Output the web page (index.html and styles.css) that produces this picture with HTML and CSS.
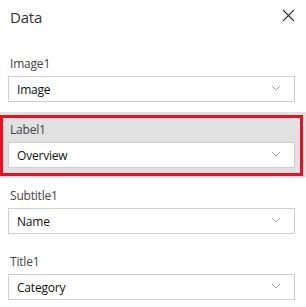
FILE: index.html
```html
<!DOCTYPE html>
<html lang="en">
<head>
    <meta charset="UTF-8">
    <meta name="viewport" content="width=device-width, initial-scale=1.0">
    <title>Data</title>
    <link rel="stylesheet" href="styles.css">
</head>
<body>
    <div class="panel">
        <div class="panel-header">
            <h1>Data</h1>
            <button class="close-btn" aria-label="Close">
                <svg width="13" height="13" viewBox="0 0 13 13">
                    <path d="M1 1 L12 12 M12 1 L1 12" stroke="#333" stroke-width="1.1" fill="none"/>
                </svg>
            </button>
        </div>

        <div class="field">
            <div class="field-label">Image1</div>
            <div class="select">
                <span>Image</span>
                <svg class="chevron" width="10" height="6" viewBox="0 0 10 6"><polyline points="1,1 5,5 9,1" fill="none" stroke="#a6a6a6" stroke-width="1"/></svg>
            </div>
        </div>

        <div class="field selected">
            <div class="field-label">Label1</div>
            <div class="select">
                <span>Overview</span>
                <svg class="chevron" width="10" height="6" viewBox="0 0 10 6"><polyline points="1,1 5,5 9,1" fill="none" stroke="#a6a6a6" stroke-width="1"/></svg>
            </div>
        </div>

        <div class="field">
            <div class="field-label">Subtitle1</div>
            <div class="select">
                <span>Name</span>
                <svg class="chevron" width="10" height="6" viewBox="0 0 10 6"><polyline points="1,1 5,5 9,1" fill="none" stroke="#a6a6a6" stroke-width="1"/></svg>
            </div>
        </div>

        <div class="field">
            <div class="field-label">Title1</div>
            <div class="select">
                <span>Category</span>
                <svg class="chevron" width="10" height="6" viewBox="0 0 10 6"><polyline points="1,1 5,5 9,1" fill="none" stroke="#a6a6a6" stroke-width="1"/></svg>
            </div>
        </div>
    </div>
</body>
</html>
```

FILE: styles.css
```css
* {
    margin: 0;
    padding: 0;
    box-sizing: border-box;
}

body {
    font-family: 'Open Sans', 'Noto Sans', sans-serif;
    background: white;
    color: #222;
    width: 306px;
    height: 307px;
    overflow: hidden;
}

.panel {
    width: 306px;
}

.panel-header {
    display: flex;
    justify-content: space-between;
    align-items: flex-start;
    height: 46px;
    padding: 6px 11px 0 10px;
}

.panel-header h1 {
    font-size: 15px;
    font-weight: 400;
    line-height: 22px;
    color: #333;
    letter-spacing: -0.2px;
}

.close-btn {
    background: none;
    border: none;
    width: 13px;
    height: 13px;
    margin-top: 3px;
    display: flex;
}

.field {
    position: relative;
    height: 66px;
    padding: 8px 11px 0 8px;
}

.field-label {
    font-size: 12px;
    line-height: 20px;
    color: #444;
    padding-left: 2px;
    margin-bottom: 2px;
    letter-spacing: -0.2px;
}

.select {
    display: flex;
    align-items: center;
    justify-content: space-between;
    height: 26px;
    padding: 0 13px 0 8px;
    background: white;
    border: 1px solid #cfcfcf;
    font-size: 12px;
    color: #111;
    letter-spacing: -0.2px;
}

.chevron {
    margin-top: -3px;
}

.field.selected {
    background: #e1e1e1;
}

.field.selected::after {
    content: "";
    position: absolute;
    top: 3px;
    left: 0;
    right: 3px;
    bottom: 2px;
    border: 3px solid #e81123;
}
```
